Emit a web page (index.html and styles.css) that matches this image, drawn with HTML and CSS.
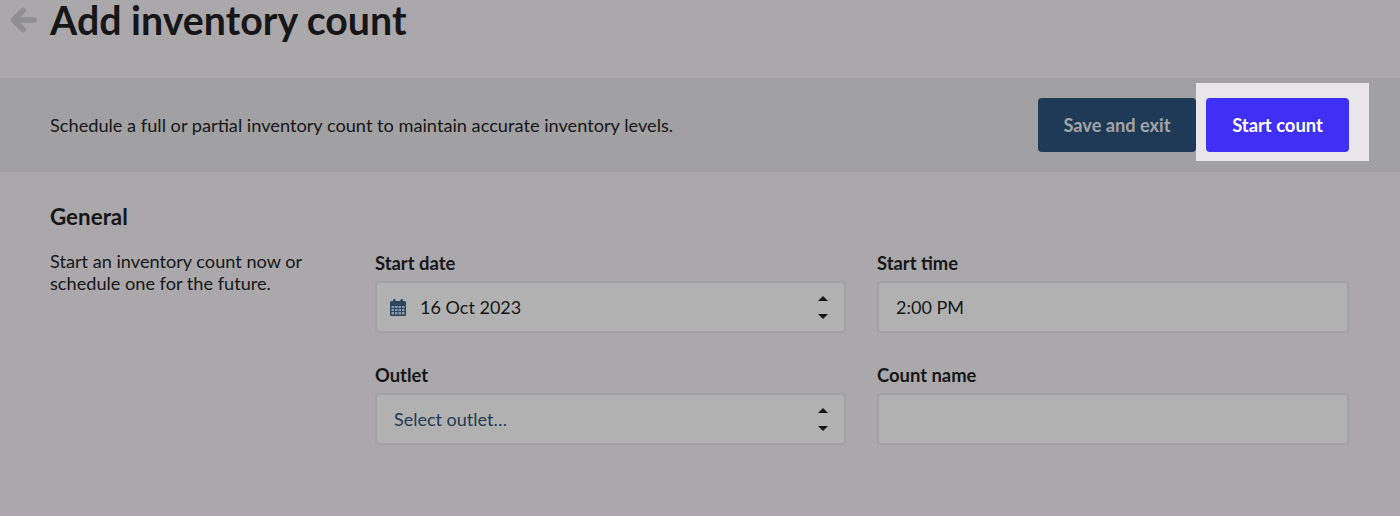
FILE: index.html
```html
<!DOCTYPE html>
<html lang="en">
  <head>
    <meta charset="UTF-8" />
    <meta name="viewport" content="width=device-width, initial-scale=1.0" />
    <title>Add inventory count</title>
    <link rel="stylesheet" href="styles.css">
  </head>
  <body>
    <header class="title-row">
      <svg class="back-icon" width="28" height="28" viewBox="0 0 28 28">
        <path d="M25 14H5M14 4.500L4.500 14l9.500 9.500" fill="none" stroke="#8f8e90" stroke-width="5.500" stroke-linecap="round" stroke-linejoin="round" />
      </svg>
      <h1>Add inventory count</h1>
    </header>

    <div class="action-bar">
      <p>Schedule a full or partial inventory count to maintain accurate inventory levels.</p>
      <div class="actions">
        <button type="button" class="btn btn-dark">Save and exit</button>
        <div class="spotlight-wrap">
          <span class="spotlight"></span>
          <button type="button" class="btn btn-primary">Start count</button>
        </div>
      </div>
    </div>

    <section class="general">
      <div class="intro">
        <h2>General</h2>
        <p>Start an inventory count now or schedule one for the future.</p>
      </div>
      <form class="fields">
        <div class="field">
          <label>Start date</label>
          <div class="input">
            <svg class="calendar" width="18" height="19" viewBox="0 0 18 19">
              <rect x="1" y="3" width="16" height="15" rx="1.500" fill="#2c4560" />
              <rect x="4" y="1" width="2.500" height="4" rx="1.200" fill="#2c4560" />
              <rect x="11.500" y="1" width="2.500" height="4" rx="1.200" fill="#2c4560" />
              <path d="M2 7.500h14v9.500H2zM2 10.500h14M2 13.500h14M5.500 7.500v9.500M9 7.500v9.500M12.500 7.500v9.500" fill="#8d99a6" stroke="#2c4560" stroke-width="1" />
            </svg>
            <span>16 Oct 2023</span>
            <span class="stepper"><i class="up"></i><i class="down"></i></span>
          </div>
        </div>
        <div class="field">
          <label>Start time</label>
          <div class="input"><span>2:00 PM</span></div>
        </div>
        <div class="field">
          <label>Outlet</label>
          <div class="input">
            <span class="placeholder">Select outlet…</span>
            <span class="stepper"><i class="up"></i><i class="down"></i></span>
          </div>
        </div>
        <div class="field">
          <label>Count name</label>
          <div class="input"></div>
        </div>
      </form>
    </section>
  </body>
</html>
```

FILE: styles.css
```css
html,
body {
  height: 100%;
}
body {
  margin: 0;
  overflow: hidden;
  background-color: #aaa8ab;
  color: #161618;
  font-family: Lato, "Open Sans", sans-serif;
  font-size: 18px;
}
p {
  margin: 0;
}
.title-row {
  display: flex;
  align-items: center;
  height: 78px;
  padding: 0 0 38px 9px;
  box-sizing: border-box;
}
.back-icon {
  margin-right: 13px;
}
h1 {
  margin: 0;
  font-size: 39.3px;
  font-weight: 700;
  line-height: 40px;
}
.action-bar {
  display: flex;
  justify-content: space-between;
  align-items: center;
  height: 94px;
  padding: 0 51px 0 50px;
  background-color: #a1a0a2;
}
.action-bar p {
  font-size: 18.2px;
}
.actions {
  display: flex;
  gap: 8px;
}
.btn {
  height: 54px;
  border: none;
  border-radius: 4px;
  font-family: inherit;
  font-size: 18.4px;
  font-weight: 700;
}
.btn-dark {
  width: 158px;
  margin-right: 2px;
  background-color: #1f3a56;
  color: #a4a4a6;
  font-size: 18.2px;
}
.btn-primary {
  position: relative;
  width: 143px;
  background-color: #402ff5;
  color: #fff;
}
.spotlight-wrap {
  position: relative;
  display: flex;
}
.spotlight {
  position: absolute;
  top: -15px;
  left: -10px;
  right: -20px;
  bottom: -9px;
  background-color: #e8e6e9;
}
.general {
  display: grid;
  grid-template-columns: 325px 1fr;
  padding: 32px 51px 0 50px;
}
h2 {
  margin: 0 0 20px;
  font-size: 22.4px;
  font-weight: 700;
  line-height: 26px;
}
.intro p {
  width: 270px;
  font-size: 18.15px;
  line-height: 22px;
}
.fields {
  display: grid;
  grid-template-columns: 471px 472px;
  column-gap: 31px;
  row-gap: 31px;
  padding-top: 48px;
}
.field label {
  display: block;
  height: 29px;
  font-size: 18.4px;
  line-height: 22px;
  font-weight: 700;
}
.input {
  display: flex;
  align-items: center;
  height: 52px;
  padding: 0 17px;
  box-sizing: border-box;
  background-color: #b1b1b1;
  border: 2px solid #a2a1a3;
  border-radius: 4px;
}
.calendar {
  margin-right: 13px;
  margin-left: -5px;
}
.placeholder {
  color: #1f3a56;
}
.stepper {
  display: flex;
  flex-direction: column;
  gap: 13px;
  margin-left: auto;
  margin-right: -1px;
}
.stepper i {
  display: block;
  width: 0;
  height: 0;
  border-left: 5px solid transparent;
  border-right: 5px solid transparent;
}
.stepper .up {
  border-bottom: 5px solid #161618;
}
.stepper .down {
  border-top: 5px solid #161618;
}
```
